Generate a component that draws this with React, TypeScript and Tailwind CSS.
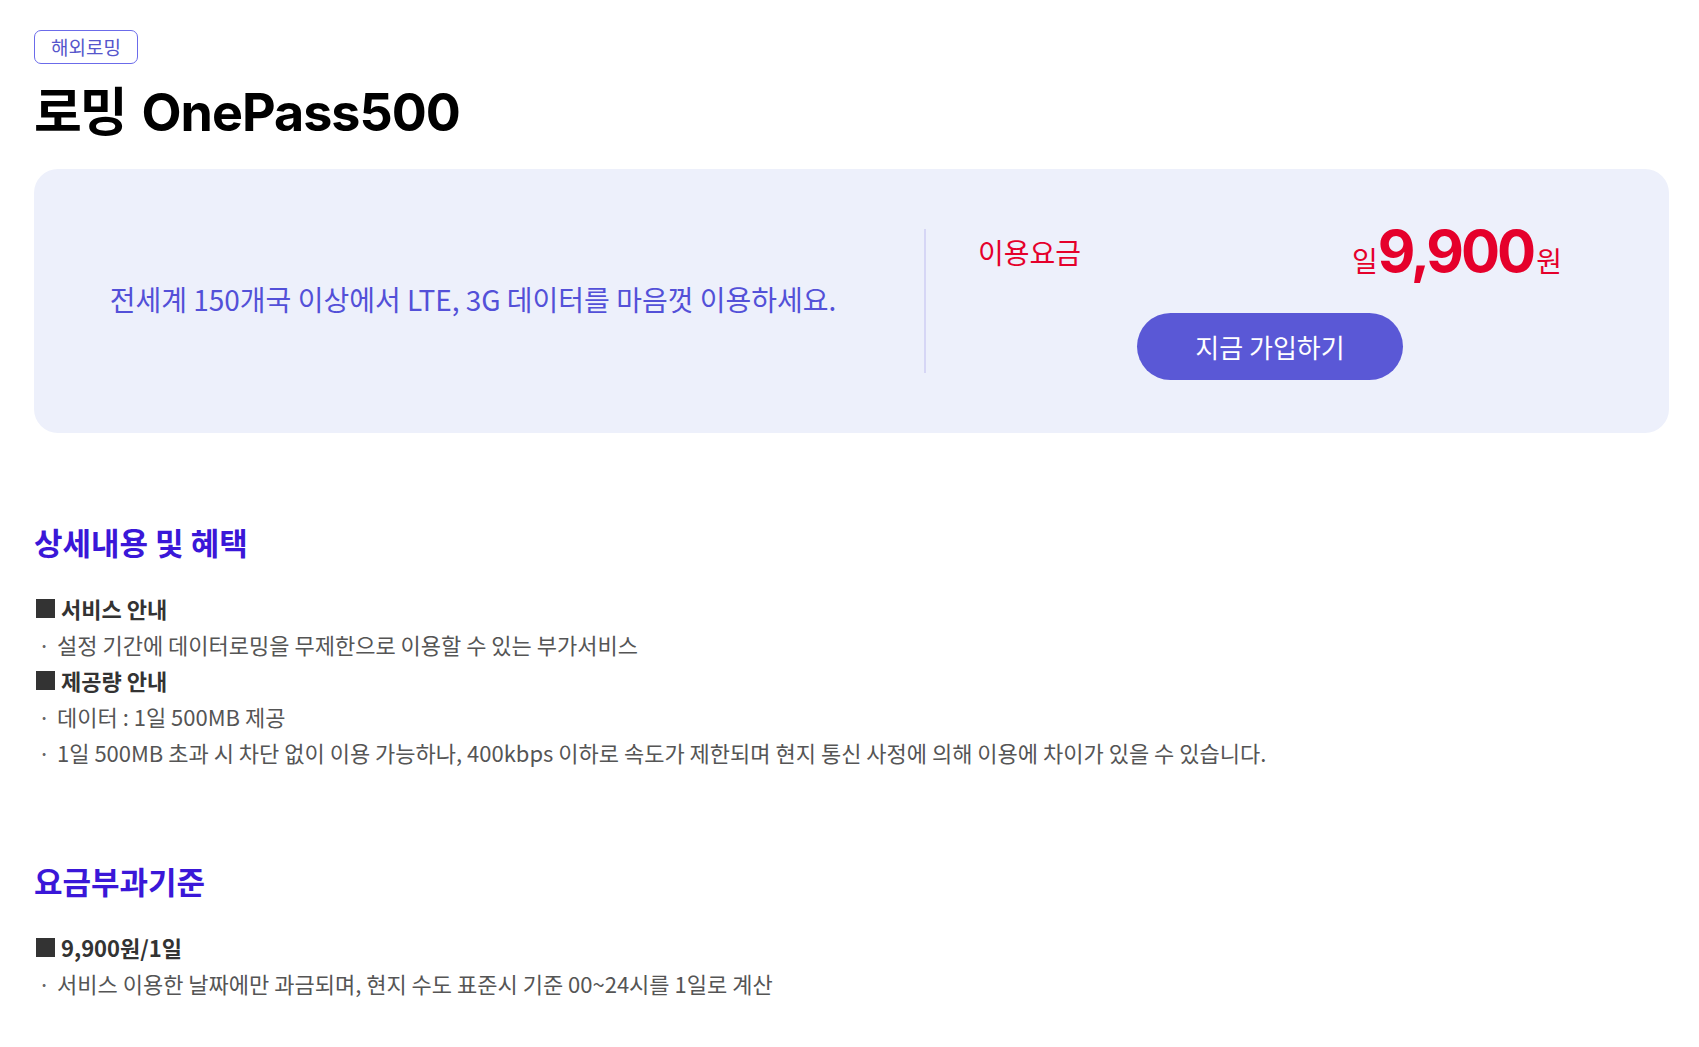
import React from "react";

const BulletLine = ({ children }: { children: React.ReactNode }) => (
  <div className="flex h-[36px] items-center text-[22px] text-[#555]">
    <span className="w-[23px] pl-[4px] text-[#666]">·</span>
    <span>{children}</span>
  </div>
);

const SubTitle = ({ children }: { children: React.ReactNode }) => (
  <div className="flex h-[36px] items-center text-[22px] font-bold text-[#333]">
    <span className="ml-[2px] mr-[6px] h-[19px] w-[19px] bg-[#333]" />
    <span>{children}</span>
  </div>
);

const SectionTitle = ({ children }: { children: React.ReactNode }) => (
  <h2 className="h-[40px] leading-[40px] text-[31px] font-bold text-[#3a17d8]">
    {children}
  </h2>
);

function App() {
  return (
    <div className="min-h-screen bg-white pl-[34px] pr-[30px] pt-[30px] pb-10 font-['Noto_Sans_CJK_KR',sans-serif]">
      <span className="inline-flex h-[34px] items-center rounded-[7px] border border-[#6b6bea] px-[16px] text-[19px] text-[#5656cc]">
        해외로밍
      </span>

      <h1 className="mt-[15px] flex h-[60px] items-baseline gap-[16px] leading-[60px] font-bold text-black">
        <span className="text-[52px] tracking-[-0.04em]">로밍</span>
        <span className="font-['Inter',sans-serif] text-[52px] tracking-[-1px]">OnePass500</span>
      </h1>

      <section className="mt-[30px] flex h-[264px] items-center rounded-[24px] bg-[#edf0fb]">
        <div className="mb-[4px] flex flex-1 justify-center pr-[12px]">
          <p className="text-[28px] text-[#5350d8]">
            전세계 150개국 이상에서 LTE, 3G 데이터를 마음껏 이용하세요.
          </p>
        </div>
        <div className="h-[144px] w-[2px] bg-[#d6d6f5]" />
        <div className="ml-[52px] mr-[107px] flex w-[584px] flex-col">
          <div className="flex items-center justify-between">
            <span className="text-[28px] text-[#e5002b]">이용요금</span>
            <span className="flex items-baseline text-[#e5002b]">
              <span className="text-[28px]">일</span>
              <span className="font-['Inter',sans-serif] text-[58px] leading-[58px] font-bold tracking-[-3px]">
                9,900
              </span>
              <span className="ml-[3px] text-[28px]">원</span>
            </span>
          </div>
          <div className="mt-[32px] flex justify-center">
            <button className="h-[67px] w-[266px] rounded-full bg-[#5a58d6] text-[26px] text-white">
              지금 가입하기
            </button>
          </div>
        </div>
      </section>

      <div className="mt-[89px]">
        <SectionTitle>상세내용 및 혜택</SectionTitle>
        <div className="mt-[28px]">
          <SubTitle>서비스 안내</SubTitle>
          <BulletLine>설정 기간에 데이터로밍을 무제한으로 이용할 수 있는 부가서비스</BulletLine>
          <SubTitle>제공량 안내</SubTitle>
          <BulletLine>데이터 : 1일 500MB 제공</BulletLine>
          <BulletLine>
            1일 500MB 초과 시 차단 없이 이용 가능하나, 400kbps 이하로 속도가 제한되며 현지 통신 사정에 의해 이용에 차이가 있을 수 있습니다.
          </BulletLine>
        </div>
      </div>

      <div className="mt-[91px]">
        <SectionTitle>요금부과기준</SectionTitle>
        <div className="mt-[28px]">
          <SubTitle>9,900원/1일</SubTitle>
          <BulletLine>서비스 이용한 날짜에만 과금되며, 현지 수도 표준시 기준 00~24시를 1일로 계산</BulletLine>
        </div>
      </div>
    </div>
  );
}

export default App;
